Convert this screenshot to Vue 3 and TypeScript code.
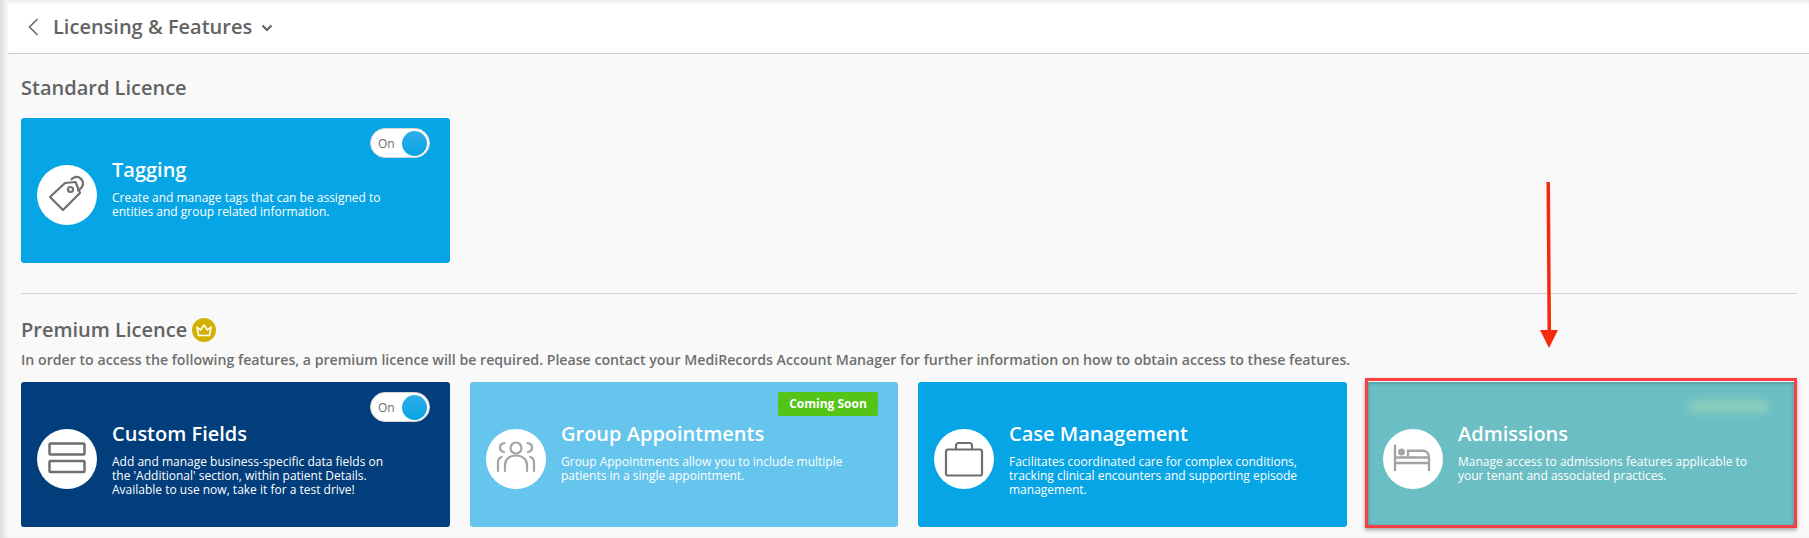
<script setup lang="ts">
interface Feature {
  title: string;
  lines: string[];
  icon: string;
  tone: string;
  toggle?: boolean;
  soon?: boolean;
  blurred?: boolean;
}

const standard: Feature[] = [
  {
    title: "Tagging",
    lines: ["Create and manage tags that can be assigned to", "entities and group related information."],
    icon: "tag",
    tone: "blue",
    toggle: true,
  },
];

const premium: Feature[] = [
  {
    title: "Custom Fields",
    lines: [
      "Add and manage business-specific data fields on",
      "the 'Additional' section, within patient Details.",
      "Available to use now, take it for a test drive!",
    ],
    icon: "fields",
    tone: "navy",
    toggle: true,
  },
  {
    title: "Group Appointments",
    lines: ["Group Appointments allow you to include multiple", "patients in a single appointment."],
    icon: "group",
    tone: "light",
    soon: true,
  },
  {
    title: "Case Management",
    lines: [
      "Facilitates coordinated care for complex conditions,",
      "tracking clinical encounters and supporting episode",
      "management.",
    ],
    icon: "case",
    tone: "blue",
  },
  {
    title: "Admissions",
    lines: ["Manage access to admissions features applicable to", "your tenant and associated practices."],
    icon: "bed",
    tone: "teal",
    blurred: true,
  },
];

const cardGroups = { standard, premium };
</script>

<template>
  <div class="page">
    <header class="topbar">
      <svg class="back" width="14" height="20" viewBox="0 0 14 20" fill="none" stroke="#6b6b6b" stroke-width="1.6" aria-hidden="true">
        <path d="M11.5 2L3.5 10l8 8" />
      </svg>
      <span class="topbar-title">Licensing &amp; Features</span>
      <svg class="caret" width="12" height="8" viewBox="0 0 12 8" fill="none" stroke="#5f5f5f" stroke-width="2" aria-hidden="true">
        <path d="M1.5 1.5L6 6l4.500-4.500" />
      </svg>
    </header>

    <main class="content">
      <h2 class="section-title">Standard Licence</h2>
      <div class="grid">
        <article v-for="c in cardGroups.standard" :key="c.title" class="card" :class="c.tone">
          <div class="card-top">
            <div v-if="c.toggle" class="toggle">
              <span>On</span>
              <i class="knob"></i>
            </div>
          </div>
          <div class="card-body">
            <div class="circle">
              <svg width="40" height="40" viewBox="0 0 40 40" fill="none" stroke="#6f6f6f" stroke-width="2.200" aria-hidden="true">
                <path d="M3 22L18 8l10.500-1L33 18 16 35z" stroke-linejoin="round" />
                <circle cx="23.500" cy="14.500" r="2.500" />
                <path d="M24 5c2-3 6-4 9-2 3 2 4 6 2 9-1 2-3 3-5 3.500" />
              </svg>
            </div>
            <div class="text">
              <h3>{{ c.title }}</h3>
              <p v-for="line in c.lines" :key="line">{{ line }}</p>
            </div>
          </div>
        </article>
      </div>

      <hr class="divider" />

      <h2 class="section-title premium-title">
        Premium Licence
        <span class="crown">
          <svg width="16" height="14" viewBox="0 0 16 14" fill="none" stroke="#fff" stroke-width="1.500" stroke-linejoin="round" aria-hidden="true">
            <path d="M2.500 12.500h11L15 4l-3.500 3L8 2 4.500 7 1 4z" />
          </svg>
        </span>
      </h2>
      <p class="notice">
        In order to access the following features, a premium licence will be required. Please contact your MediRecords Account Manager for further information on how to obtain access to these features.
      </p>

      <div class="grid">
        <article v-for="c in cardGroups.premium" :key="c.title" class="card" :class="c.tone">
          <div class="card-top">
            <div v-if="c.toggle" class="toggle">
              <span>On</span>
              <i class="knob"></i>
            </div>
            <span v-if="c.soon" class="soon">Coming Soon</span>
            <span v-if="c.blurred" class="soon-blur"></span>
          </div>
          <div class="card-body">
            <div class="circle">
              <svg v-if="c.icon === 'fields'" width="40" height="40" viewBox="0 0 40 40" fill="none" stroke="#6f6f6f" stroke-width="2.500" aria-hidden="true">
                <rect x="2.500" y="4.500" width="35" height="11" rx="1" />
                <rect x="2.500" y="22" width="35" height="11" rx="1" />
              </svg>
              <svg v-else-if="c.icon === 'group'" width="40" height="40" viewBox="0 0 40 40" fill="none" stroke="#a3a3a3" stroke-width="2.200" stroke-linecap="round" aria-hidden="true">
                <circle cx="20" cy="9" r="5.500" />
                <path d="M9 32v-6c0-6 5-9.500 11-9.500S31 20 31 26v6" />
                <path d="M8.500 4C5.500 4.500 4 6 4 8.500S5.500 12.500 8 13" />
                <path d="M31.500 4c3 .5 4.500 2 4.500 4.500S34.500 12.500 32 13" />
                <path d="M2 32v-8c0-3 1-5 3.500-6" />
                <path d="M38 32v-8c0-3-1-5-3.500-6" />
              </svg>
              <svg v-else-if="c.icon === 'case'" width="40" height="40" viewBox="0 0 40 40" fill="none" stroke="#6f6f6f" stroke-width="2.200" aria-hidden="true">
                <rect x="2" y="10.500" width="36" height="26" rx="2" />
                <path d="M12 10V6.500c0-1.500 1-2.500 2.500-2.500h11c1.500 0 2.500 1 2.500 2.500V10" />
              </svg>
              <svg v-else width="40" height="40" viewBox="0 0 40 40" fill="none" stroke="#a3a3a3" stroke-width="2.400" aria-hidden="true">
                <circle cx="8.500" cy="13" r="3.500" fill="#a3a3a3" stroke="none" />
                <path d="M2 5.500V32" />
                <path d="M36 18.500V32" />
                <path d="M2 18.500h34" />
                <path d="M2 24h34" />
                <path d="M15 18.500V11.700h15c3.500 0 6 2.800 6 6.800" />
              </svg>
            </div>
            <div class="text">
              <h3>{{ c.title }}</h3>
              <p v-for="line in c.lines" :key="line">{{ line }}</p>
            </div>
          </div>
        </article>
      </div>
    </main>

    <div class="red-box"></div>
    <svg class="arrow" width="20" height="168" viewBox="0 0 20 168" aria-hidden="true">
      <path d="M7.500 0H11l1 148h7l-9 18-9-18h7.500z" fill="#f52a0a" />
    </svg>
  </div>
</template>

<style>
html,
body {
  margin: 0;
  background: #f9f9f9;
}
</style>

<style scoped>
.page {
  position: relative;
  width: 1809px;
  height: 538px;
  overflow: hidden;
  background: #f9f9f9;
  font-family: "Open Sans", "Noto Sans", sans-serif;
  color: #636363;
  box-shadow: inset 8px 0 6px -4px rgba(0, 0, 0, 0.12);
}

.topbar {
  display: flex;
  align-items: center;
  box-sizing: border-box;
  height: 54px;
  margin-left: 8px;
  padding-left: 18px;
  background: #fff;
  border-bottom: 1px solid #d0d0d0;
  box-shadow: inset 0 6px 5px -4px rgba(0, 0, 0, 0.1);
}

.back {
  margin-right: 13px;
}

.topbar-title {
  font-size: 20px;
  font-weight: 600;
  color: #636363;
}

.caret {
  margin-left: 9px;
  margin-top: 2px;
}

.content {
  padding: 20px 12px 0 21px;
}

.section-title {
  margin: 0;
  font-size: 20px;
  font-weight: 600;
  line-height: 28px;
  color: #636363;
}

.grid {
  display: grid;
  grid-template-columns: 429px 428px 429px 428px;
  column-gap: 20px;
  margin-top: 16px;
}

.card {
  box-sizing: border-box;
  height: 145px;
  padding: 10px 20px 0 16px;
  border-radius: 3px;
  color: #fff;
}

.blue {
  background: #06a5e5;
}

.navy {
  background: #023d7c;
}

.light {
  background: #65c5ec;
}

.teal {
  background: #6bbec4;
  box-shadow: inset 0 0 4px rgba(40, 90, 100, 0.7);
}

.card-top {
  display: flex;
  justify-content: flex-end;
  height: 30px;
}

.toggle {
  display: flex;
  align-items: center;
  justify-content: space-between;
  box-sizing: border-box;
  width: 60px;
  height: 30px;
  padding: 0 2px 0 7px;
  background: #fff;
  border: 1px solid #d4d4d4;
  border-radius: 15px;
  font-size: 12px;
  color: #6d6d6d;
}

.knob {
  width: 25px;
  height: 25px;
  border-radius: 50%;
  background: linear-gradient(#2eaee8, #06a5e5);
}

.soon {
  box-sizing: border-box;
  width: 100px;
  height: 24px;
  line-height: 24px;
  text-align: center;
  border-radius: 2px;
  background: #54c418;
  font-size: 12px;
  font-weight: 700;
  color: #fff;
}

.soon-blur {
  width: 80px;
  height: 13px;
  margin: 8px 6px 0 0;
  background: #95d3bb;
  opacity: 0.75;
  filter: blur(4px);
}

.card-body {
  display: flex;
  align-items: flex-start;
  gap: 15px;
  margin-top: 7px;
}

.circle {
  display: flex;
  align-items: center;
  justify-content: center;
  flex-shrink: 0;
  width: 60px;
  height: 60px;
  border-radius: 50%;
  background: #fff;
}

.text {
  white-space: nowrap;
}

.text h3 {
  margin: -9px 0 7px;
  font-size: 20px;
  font-weight: 600;
  line-height: 28px;
}

.text p {
  margin: 0;
  font-size: 12px;
  line-height: 14px;
}

.divider {
  height: 1px;
  margin: 30px 0 0;
  border: 0;
  background: #d4d4d4;
}

.premium-title {
  display: flex;
  align-items: center;
  gap: 5px;
  margin-top: 22px;
}

.crown {
  display: flex;
  align-items: center;
  justify-content: center;
  width: 24px;
  height: 24px;
  border-radius: 50%;
  background: #d4af06;
}

.notice {
  margin: 6px 0 0;
  font-size: 14.17px;
  font-weight: 600;
  line-height: 20px;
  color: #6f6f6f;
  white-space: nowrap;
}

.premium-title + .notice + .grid {
  margin-top: 12px;
}

.red-box {
  position: absolute;
  left: 1365px;
  top: 378px;
  width: 432px;
  height: 150px;
  box-sizing: border-box;
  border: 3px solid #f93f3f;
  box-shadow: 0 2px 4px rgba(0, 0, 0, 0.35);
}

.arrow {
  position: absolute;
  left: 1539px;
  top: 182px;
}
</style>
